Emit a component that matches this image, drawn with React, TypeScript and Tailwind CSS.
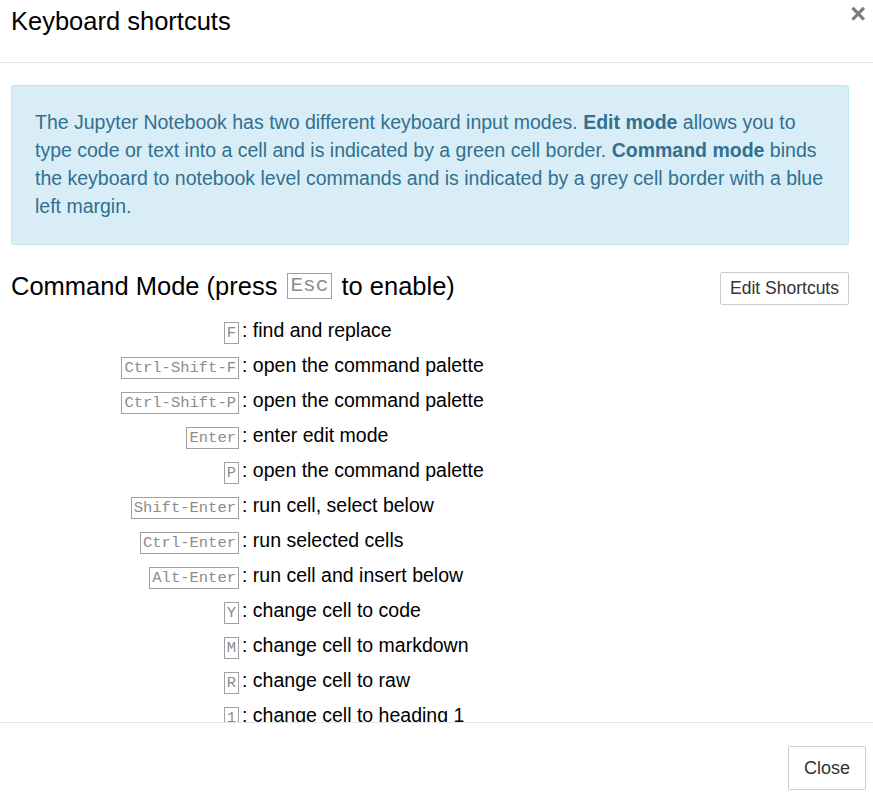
import React from "react";

const shortcuts: { keys: string; desc: string }[] = [
  { keys: "F", desc: "find and replace" },
  { keys: "Ctrl-Shift-F", desc: "open the command palette" },
  { keys: "Ctrl-Shift-P", desc: "open the command palette" },
  { keys: "Enter", desc: "enter edit mode" },
  { keys: "P", desc: "open the command palette" },
  { keys: "Shift-Enter", desc: "run cell, select below" },
  { keys: "Ctrl-Enter", desc: "run selected cells" },
  { keys: "Alt-Enter", desc: "run cell and insert below" },
  { keys: "Y", desc: "change cell to code" },
  { keys: "M", desc: "change cell to markdown" },
  { keys: "R", desc: "change cell to raw" },
  { keys: "1", desc: "change cell to heading 1" },
  { keys: "2", desc: "change cell to heading 2" },
  { keys: "3", desc: "change cell to heading 3" },
];

function Kbd({ children }: { children: React.ReactNode }) {
  return (
    <kbd className="inline-block border border-[#a0a0a0] px-[2px] h-[22px] leading-[21px] text-[15.5px] text-[#8c8c8c] font-['Liberation_Mono',monospace]">
      {children}
    </kbd>
  );
}

export default function App() {
  return (
    <div className="w-[873px] h-[798px] flex flex-col bg-white text-[#000] font-['Liberation_Sans',Arial,sans-serif] overflow-hidden">
      {/* header */}
      <div className="h-[63px] shrink-0 border-b border-[#e5e5e5] flex items-start justify-between pl-[11px] pr-[7px]">
        <h4 className="text-[25.5px] leading-[28px] pt-[7px] text-[#000]">Keyboard shortcuts</h4>
        <button type="button" className="text-[27px] leading-[27px] font-bold text-[#7a7a7a] pt-[1px]">
          ×
        </button>
      </div>

      {/* body */}
      <div className="flex-1 overflow-hidden pl-[11px] pr-[24px] pt-[22px]">
        <div className="bg-[#d9edf7] border border-[#bce8f1] rounded-[3px] text-[#31708f] text-[19.5px] leading-[28px] pl-[23px] pr-[20px] pt-[22px] pb-[24px]">
          The Jupyter Notebook has two different keyboard input modes.{" "}
          <b>Edit mode</b> allows you to type code or text into a cell and is indicated by a green
          cell border. <b>Command mode</b> binds the keyboard to notebook level commands and is
          indicated by a grey cell border with a blue left margin.
        </div>

        <div className="flex items-start justify-between mt-[24px]">
          <h4 className="text-[25.5px] leading-[30px] flex items-center mt-[2px]">
            Command Mode (press&nbsp;
            <kbd className="inline-block border border-[#a0a0a0] px-[3px] h-[26px] leading-[24px] text-[21px] text-[#8c8c8c] font-['Liberation_Mono',monospace] mx-[2px]">
              Esc
            </kbd>
            &nbsp;to enable)
          </h4>
          <button
            type="button"
            className="border border-[#ccc] rounded-[2px] px-[9px] h-[33px] mt-[3px] text-[17.5px] text-[#333] bg-white"
          >
            Edit Shortcuts
          </button>
        </div>

        <div className="mt-[7px] flex flex-col">
          {shortcuts.map((s) => (
            <div key={s.keys} className="flex items-center h-[35px] text-[19.5px] leading-[28px]">
              <div className="w-[228px] text-right shrink-0">
                <Kbd>{s.keys}</Kbd>
              </div>
              <span className="ml-[3px]">: {s.desc}</span>
            </div>
          ))}
        </div>
      </div>

      {/* footer */}
      <div className="h-[76px] shrink-0 border-t border-[#e5e5e5] flex items-start justify-end pr-[7px] pt-[23px]">
        <button
          type="button"
          className="border border-[#ccc] rounded-[2px] w-[78px] h-[44px] text-[18px] text-[#333] bg-white"
        >
          Close
        </button>
      </div>
    </div>
  );
}
